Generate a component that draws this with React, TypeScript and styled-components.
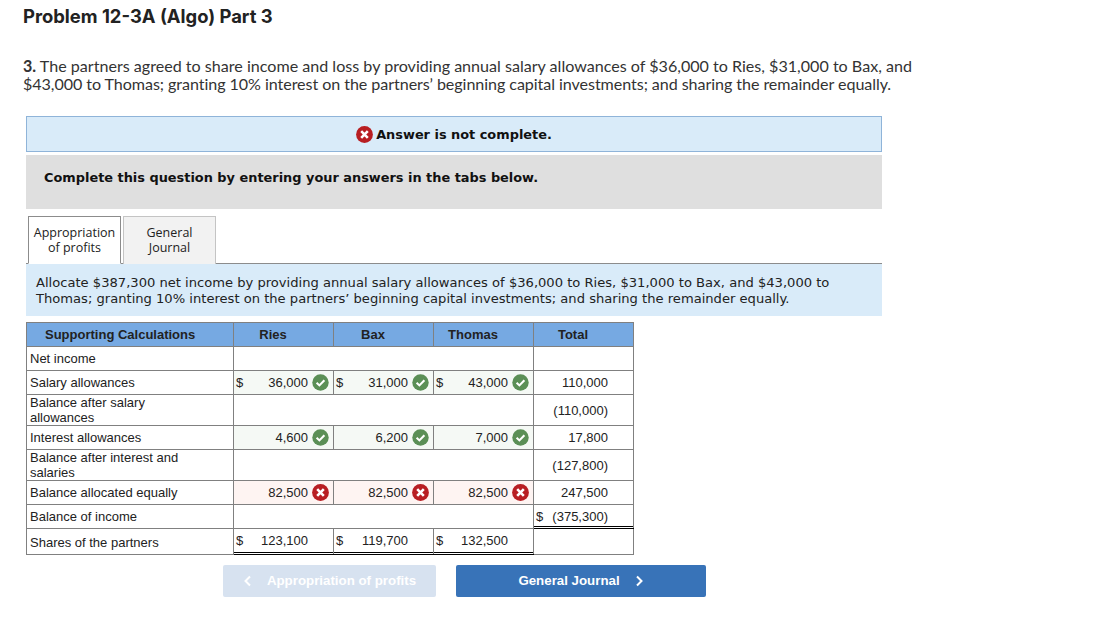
import React from 'react';
import styled, { createGlobalStyle } from 'styled-components';

const GlobalStyle = createGlobalStyle`
    html, body {
        margin: 0;
        padding: 0;
        background: #fff;
    }
`;

const Page = styled.div`
    width: 1099px;
    height: 631px;
    overflow: hidden;
    padding: 6px 0 0 23px;
    box-sizing: border-box;
    color: #1a1a1a;
`;

const Title = styled.h1`
    margin: 0;
    font: 700 18.4px/21px Inter, sans-serif;
    color: #222;
`;

const Intro = styled.p`
    margin: 30px 0 0;
    width: 900px;
    font: 400 16.1px/18px Lato, sans-serif;
    color: #333;
    b {
        font-weight: 700;
    }
`;

const IntroTight = styled.span`
    letter-spacing: -0.065px;
`;

const Panel = styled.div`
    margin: 23px 0 0 3px;
    width: 856px;
`;

const Alert = styled.div`
    height: 36px;
    box-sizing: border-box;
    border: 1px solid #8fb4d9;
    background: #d9ebf9;
    display: flex;
    align-items: center;
    justify-content: center;
    gap: 3px;
    font: 700 12.9px "DejaVu Sans", sans-serif;
    color: #111;
`;

const Instruction = styled.div`
    margin-top: 3px;
    height: 54px;
    box-sizing: border-box;
    padding: 14px 18px 0;
    background: #dfdfdf;
    font: 700 12.9px/18px "DejaVu Sans", sans-serif;
    color: #111;
`;

const Tabs = styled.div`
    display: flex;
    gap: 2px;
    margin-top: 7px;
    padding-left: 2px;
    border-bottom: 1px solid #8c8c8c;
    height: 47px;
`;

const Tab = styled.div<{ $active?: boolean }>`
    width: 93px;
    height: 48px;
    box-sizing: border-box;
    border: 1px solid #c4c4c4;
    border-bottom: none;
    background: #f2f2f2;
    text-align: center;
    padding-top: 8px;
    font: 400 12.5px/15px "Open Sans", "DejaVu Sans", sans-serif;
    color: #222;
    ${({ $active }) => $active && `
        border: 1px solid #8c8c8c;
        border-bottom: 1px solid #fff;
        background: #fff;
        position: relative;
        z-index: 1;
    `}
`;

const Allocate = styled.div`
    height: 52px;
    box-sizing: border-box;
    padding: 11px 10px 0;
    background: #d9ebf9;
    font: 400 13.1px/16px "DejaVu Sans", sans-serif;
    color: #222;
`;

const Sheet = styled.table`
    margin-top: 6px;
    border-collapse: collapse;
    table-layout: fixed;
    width: 607px;
    font: 400 13px/15px "Liberation Sans", Arial, sans-serif;
    color: #222;
`;

const HeadCell = styled.th`
    height: 23px;
    padding: 0 21px 0 0;
    border: 1px solid #808080;
    background: #76a9e2;
    font: 700 13px/15px "Liberation Sans", Arial, sans-serif;
    color: #222;
    text-align: center;
`;

const HeadLabel = styled(HeadCell)`
    text-align: left;
    padding: 0 0 0 18px;
`;

const Row = styled.tr<{ $h: number }>`
    height: ${({ $h }) => $h}px;
`;

const Label = styled.td<{ $low?: boolean }>`
    padding: ${({ $low }) => ($low ? '1px' : '0')} 3px 0;
    border: 1px solid #808080;
`;

type Tone = 'ok' | 'bad' | 'plain';

const Cell = styled.td<{ $tone?: Tone }>`
    padding: 0 4px 0 2px;
    border: 1px solid #808080;
    background: ${({ $tone }) => ($tone === 'ok' ? '#f5f9f5' : $tone === 'bad' ? '#fef4f2' : '#fff')};
`;

const BlankCell = styled.td`
    padding: 0;
    border-top: 1px solid #808080;
    border-bottom: 1px solid #808080;
`;

const TotalCell = styled(Cell)<{ $top?: boolean; $double?: boolean }>`
    padding-right: 25px;
    ${({ $top }) => $top && 'border-top: 1px solid #000;'}
    ${({ $double }) => $double && 'border-bottom: 1px solid #000; box-shadow: inset 0 -1px 0 #fff, inset 0 -2px 0 #000;'}
`;

const ShareCell = styled(TotalCell)`
    padding-bottom: 2px;
`;

const Amount = styled.div`
    display: flex;
    align-items: center;
    justify-content: flex-end;
    gap: 4px;
`;

const Dollar = styled.span`
    margin-right: auto;
`;

const Mark = styled.svg`
    flex: none;
    width: 17px;
    height: 17px;
`;

const Check = () => (
    <Mark viewBox="0 0 17 17">
        <circle cx="8.5" cy="8.5" r="8.2" fill="#5b8f56" />
        <path d="M4.6 8.8l2.8 2.6 5-5.2" fill="none" stroke="#fff" strokeWidth="2.1" />
    </Mark>
);

const Cross = () => (
    <Mark viewBox="0 0 17 17">
        <circle cx="8.5" cy="8.5" r="8.4" fill="#b81e22" />
        <path d="M5.2 5.2l6.6 6.6M11.8 5.2l-6.6 6.6" fill="none" stroke="#fff" strokeWidth="2.6" />
    </Mark>
);

const Buttons = styled.div`
    display: flex;
    gap: 20px;
    margin: 10px 0 0 197px;
`;

const NavButton = styled.div<{ $disabled?: boolean; $w: number }>`
    width: ${({ $w }) => $w}px;
    height: 32px;
    border-radius: 2px;
    display: flex;
    align-items: center;
    justify-content: center;
    gap: 15px;
    font: 700 13.3px/30px "Liberation Sans", Arial, sans-serif;
    color: #fff;
    background: ${({ $disabled }) => ($disabled ? '#d7e2f0' : '#3873b8')};
`;

const Chevron = styled.svg`
    width: 9px;
    height: 12px;
`;

const names = ['Ries', 'Bax', 'Thomas'];

const salaries = ['36,000', '31,000', '43,000'];
const interest = ['4,600', '6,200', '7,000'];
const shares = ['123,100', '119,700', '132,500'];

const Amounts: React.FC<{ values: string[]; tone: 'ok' | 'bad'; dollar?: boolean }> = ({ values, tone, dollar }) => (
    <>
        {values.map((v, i) => (
            <Cell key={i} $tone={tone}>
                <Amount>
                    {dollar && <Dollar>$</Dollar>}
                    {v}
                    {tone === 'ok' ? <Check /> : <Cross />}
                </Amount>
            </Cell>
        ))}
    </>
);

const Blank: React.FC = () => (
    <>
        {names.map((n) => (
            <BlankCell key={n} />
        ))}
    </>
);

const App: React.FC = () => (
    <Page>
        <GlobalStyle />
        <Title>Problem 12-3A (Algo) Part 3</Title>
        <Intro>
            <b>3.</b> The partners agreed to share income and loss by providing annual salary allowances of $36,000 to Ries, $31,000 to Bax, and <IntroTight>$43,000 to Thomas; granting 10% interest on the partners’ beginning capital investments; and sharing the remainder equally.</IntroTight>
        </Intro>
        <Panel>
            <Alert>
                <Cross />
                Answer is not complete.
            </Alert>
            <Instruction>Complete this question by entering your answers in the tabs below.</Instruction>
            <Tabs>
                <Tab $active>Appropriation<br />of profits</Tab>
                <Tab>General<br />Journal</Tab>
            </Tabs>
            <Allocate>
                Allocate $387,300 net income by providing annual salary allowances of $36,000 to Ries, $31,000 to Bax, and $43,000 to Thomas; granting 10% interest on the partners’ beginning capital investments; and sharing the remainder equally.
            </Allocate>
            <Sheet>
                <colgroup>
                    <col style={{ width: 207 }} />
                    <col style={{ width: 100 }} />
                    <col style={{ width: 100 }} />
                    <col style={{ width: 100 }} />
                    <col style={{ width: 100 }} />
                </colgroup>
                <thead>
                    <tr>
                        <HeadLabel>Supporting Calculations</HeadLabel>
                        {names.map((n) => (
                            <HeadCell key={n}>{n}</HeadCell>
                        ))}
                        <HeadCell>Total</HeadCell>
                    </tr>
                </thead>
                <tbody>
                    <Row $h={24}>
                        <Label>Net income</Label>
                        <Blank />
                        <TotalCell />
                    </Row>
                    <Row $h={24}>
                        <Label>Salary allowances</Label>
                        <Amounts values={salaries} tone="ok" dollar />
                        <TotalCell><Amount>110,000</Amount></TotalCell>
                    </Row>
                    <Row $h={31}>
                        <Label>Balance after salary<br />allowances</Label>
                        <Blank />
                        <TotalCell $top><Amount>(110,000)</Amount></TotalCell>
                    </Row>
                    <Row $h={24}>
                        <Label>Interest allowances</Label>
                        <Amounts values={interest} tone="ok" />
                        <TotalCell><Amount>17,800</Amount></TotalCell>
                    </Row>
                    <Row $h={31}>
                        <Label>Balance after interest and<br />salaries</Label>
                        <Blank />
                        <TotalCell $top><Amount>(127,800)</Amount></TotalCell>
                    </Row>
                    <Row $h={24}>
                        <Label>Balance allocated equally</Label>
                        <Amounts values={['82,500', '82,500', '82,500']} tone="bad" />
                        <TotalCell><Amount>247,500</Amount></TotalCell>
                    </Row>
                    <Row $h={24}>
                        <Label>Balance of income</Label>
                        <Blank />
                        <TotalCell $top $double><Amount><Dollar>$</Dollar>(375,300)</Amount></TotalCell>
                    </Row>
                    <Row $h={26}>
                        <Label $low>Shares of the partners</Label>
                        {shares.map((v) => (
                            <ShareCell key={v} $top $double><Amount><Dollar>$</Dollar>{v}</Amount></ShareCell>
                        ))}
                        <Cell />
                    </Row>
                </tbody>
            </Sheet>
            <Buttons>
                <NavButton $disabled $w={213}>
                    <Chevron viewBox="0 0 9 12"><path d="M7 1.5L2.5 6 7 10.5" fill="none" stroke="#fff" strokeWidth="2" /></Chevron>
                    Appropriation of profits
                </NavButton>
                <NavButton $w={250}>
                    General Journal
                    <Chevron viewBox="0 0 9 12"><path d="M2 1.5L6.5 6 2 10.5" fill="none" stroke="#fff" strokeWidth="2" /></Chevron>
                </NavButton>
            </Buttons>
        </Panel>
    </Page>
);

export default App;
